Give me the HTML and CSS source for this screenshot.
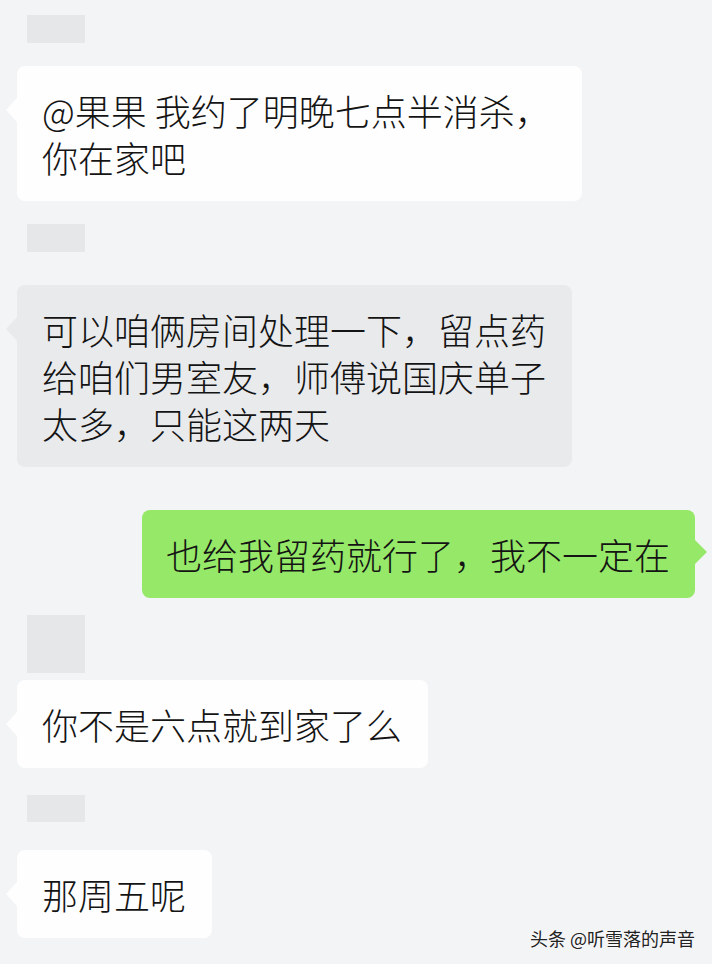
FILE: index.html
```html
<!DOCTYPE html>
<html lang="zh-CN">
<head>
  <meta charset="UTF-8" />
  <meta name="viewport" content="width=device-width, initial-scale=1.0"/>
  <title>聊天记录</title>
  <link rel="stylesheet" href="styles.css">
</head>
<body>

  <div class="chat">

    <div class="msg first">
      <div class="name"></div>
      <div class="bubble white">@果果 我约了明晚七点半消杀，<br>你在家吧</div>
    </div>

    <div class="msg second">
      <div class="name name-gap"></div>
      <div class="bubble gray">可以咱俩房间处理一下，留点药<br>给咱们男室友，师傅说国庆单子<br>太多，只能这两天</div>
    </div>

    <div class="msg mine">
      <div class="bubble green">也给我留药就行了，我不一定在</div>
    </div>

    <div class="msg third">
      <div class="name name-tall"></div>
      <div class="bubble white">你不是六点就到家了么</div>
    </div>

    <div class="msg fourth">
      <div class="name name-wide-gap"></div>
      <div class="bubble white">那周五呢</div>
    </div>

    <div class="watermark">头条 @听雪落的声音</div>
  </div>

</body>
</html>
```

FILE: styles.css
```css
body {
  margin: 0;
  background-color: #f3f4f6;
  font-family: "Noto Sans CJK SC", "Noto Sans", sans-serif;
  color: #141414;
}

.chat {
  position: relative;
  height: 964px;
  padding-top: 15px;
  box-sizing: border-box;
  overflow: hidden;
}

.msg {
  padding-left: 17px;
  padding-right: 17px;
}

.msg.second { margin-top: 23px; }
.msg.mine { margin-top: 43px; text-align: right; }
.msg.third { margin-top: 17px; }
.msg.fourth { margin-top: 27px; }

.name {
  width: 58px;
  height: 28px;
  margin-left: 10px;
  margin-bottom: 23px;
  background: #e6e7e9;
}

.name-gap { margin-bottom: 33px; }

.name-tall {
  height: 58px;
  margin-bottom: 7px;
}

.name-wide-gap {
  height: 27px;
  margin-bottom: 28px;
}

.bubble {
  position: relative;
  display: inline-block;
  text-align: left;
  font-size: 36px;
  font-weight: 300;
  line-height: 47px;
  padding: 21px 26px 20px 25px;
  border-radius: 8px;
  white-space: nowrap;
}

.bubble::before {
  content: "";
  position: absolute;
  top: 32px;
  border-top: 12px solid transparent;
  border-bottom: 12px solid transparent;
}

.white { background: #fefeff; }
.white::before {
  left: -11px;
  border-right: 11px solid #fefeff;
}

.first .bubble { padding-right: 31px; }

.gray { background: #e9eaec; }
.gray::before {
  left: -11px;
  border-right: 11px solid #e9eaec;
}

.green {
  background: #96e868;
  padding-left: 24px;
  padding-right: 25px;
}
.green::before {
  right: -12px;
  top: 30px;
  border-left: 12px solid #96e868;
}

.watermark {
  position: absolute;
  right: 17px;
  bottom: 15px;
  font-size: 18px;
  line-height: 22px;
  color: #222;
  text-shadow: 0 0 2px #fff;
}
```
